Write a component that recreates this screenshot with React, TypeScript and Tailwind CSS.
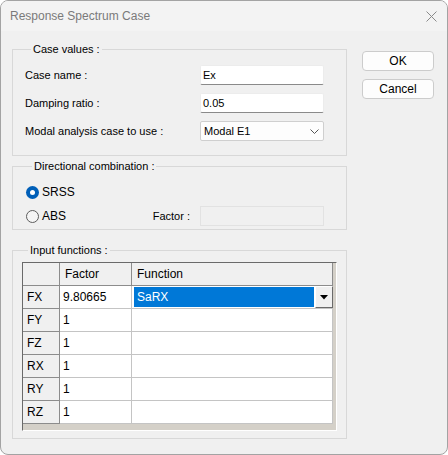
import React from "react";

const font = { fontFamily: '"Liberation Sans", Arial, sans-serif' };

const GroupBox = ({
  title,
  className,
  children,
}: {
  title: string;
  className?: string;
  children: React.ReactNode;
}) => (
  <fieldset className={`border border-[#d8d8d8] ${className ?? ""}`}>
    <legend className="ml-[6px] px-[2px] leading-4">{title}</legend>
    {children}
  </fieldset>
);

const TextBox = ({ value }: { value: string }) => (
  <div className="flex h-[20px] w-[124px] items-center border border-[#ececec] border-b-[#8a8a8a] bg-white pl-[2px] rounded-[2px]">
    {value}
  </div>
);

const Radio = ({ checked, label }: { checked: boolean; label: string }) => (
  <div className="flex items-center gap-[3px]">
    {checked ? (
      <span className="flex h-[13px] w-[13px] items-center justify-center rounded-full bg-[#005fb8]">
        <span className="h-[5px] w-[5px] rounded-full bg-white" />
      </span>
    ) : (
      <span className="h-[13px] w-[13px] rounded-full border border-[#5d5d5d] bg-[#f5f5f5]" />
    )}
    <span className="text-[12px]">{label}</span>
  </div>
);

const rows = [
  { name: "FX", factor: "9.80665", fn: "SaRX" },
  { name: "FY", factor: "1", fn: "" },
  { name: "FZ", factor: "1", fn: "" },
  { name: "RX", factor: "1", fn: "" },
  { name: "RY", factor: "1", fn: "" },
  { name: "RZ", factor: "1", fn: "" },
];

const head = "bg-[#f0f0f0] border-r border-b border-[#8c8c8c] flex items-center";
const cell = "bg-white border-r border-b border-[#c4c4c4] flex items-center";

const DataGrid = () => (
  <div className="h-[169px] w-[315px] border border-[#6a6a6a] border-r-white border-b-white bg-[#d4d0c8] text-[12px]">
    <div className="flex h-[23px]">
      <div className={`${head} w-[37px]`} />
      <div className={`${head} w-[72px] pl-[5px]`}>Factor</div>
      <div className={`${head} w-[201px] pl-[5px]`}>Function</div>
    </div>
    {rows.map((r) => (
      <div key={r.name} className="flex h-[23px]">
        <div className={`${head} w-[37px] pl-[4px]`}>{r.name}</div>
        <div className={`${cell} w-[72px] pl-[3px]`}>{r.factor}</div>
        {r.fn ? (
          <div className="flex w-[201px] border-b border-[#c4c4c4] bg-white">
            <div className="my-[1px] ml-[2px] flex flex-1 items-center bg-[#0078d7] pl-[3px] text-white">
              {r.fn}
            </div>
            <div className="ml-[1px] flex w-[18px] items-center justify-center border border-white border-r-[#6a6a6a] border-b-[#6a6a6a] bg-[#f0f0f0]">
              <svg width="8" height="5" viewBox="0 0 8 5">
                <path d="M0 0H8L4 4.5Z" fill="#000" />
              </svg>
            </div>
          </div>
        ) : (
          <div className={`${cell} w-[201px]`} />
        )}
      </div>
    ))}
  </div>
);

export default function App() {
  return (
    <div
      style={font}
      className="flex h-[455px] w-[448px] flex-col overflow-hidden rounded-[8px] border border-[#a3a3a3] bg-[#f0f0f0] text-[11px] text-black"
    >
      <div className="flex h-[30px] shrink-0 items-center justify-between bg-[#f3f3f3] pl-[9px] pr-[10px]">
        <span className="text-[12px] text-[#7a7a7a]">Response Spectrum Case</span>
        <svg width="11" height="11" viewBox="0 0 11 11">
          <path d="M0.5 0.5L10.5 10.5M10.5 0.5L0.5 10.5" stroke="#8a8a8a" strokeWidth="1" />
        </svg>
      </div>
      <div className="flex gap-[15px] pl-[11px]">
        <div className="flex w-[335px] flex-col pt-[10px]">
          <GroupBox title="Case values :" className="pb-[14px] pl-[12px] pr-[22px] pt-[8px]">
            <div className="flex flex-col gap-[8px]">
              <div className="flex items-center justify-between">
                <span>Case name :</span>
                <TextBox value="Ex" />
              </div>
              <div className="flex items-center justify-between">
                <span>Damping ratio :</span>
                <TextBox value="0.05" />
              </div>
              <div className="flex items-center justify-between">
                <span>Modal analysis case to use :</span>
                <div className="flex h-[20px] w-[124px] items-center justify-between rounded-[2px] border border-[#cfcfcf] bg-[#fdfdfd] pl-[3px] pr-[4px]">
                  <span>Modal E1</span>
                  <svg width="9" height="5" viewBox="0 0 9 5">
                    <path d="M0.5 0.5L4.5 4.5L8.5 0.5" stroke="#555" fill="none" strokeWidth="1" />
                  </svg>
                </div>
              </div>
            </div>
          </GroupBox>
          <GroupBox title="Directional combination :" className="mt-[2px] pb-[3px] pl-[13px] pr-[22px] pt-[10px]">
            <div className="flex h-[16px] items-center">
              <Radio checked label="SRSS" />
            </div>
            <div className="mt-[6px] flex h-[20px] items-center justify-between">
              <Radio checked={false} label="ABS" />
              <div className="flex items-center gap-[10px]">
                <span>Factor :</span>
                <div className="h-[20px] w-[124px] border border-[#e2e2e2] bg-[#f0f0f0]" />
              </div>
            </div>
          </GroupBox>
          <GroupBox title="Input functions :" className="mt-[12px] pb-[7px] pl-[9px] pt-[4px]">
            <DataGrid />
          </GroupBox>
        </div>
        <div className="flex flex-col gap-[8px] pt-[20px]">
          <button className="h-[20px] w-[72px] rounded-[4px] border border-[#cccccc] bg-[#fdfdfd] text-[12px]">
            OK
          </button>
          <button className="h-[20px] w-[72px] rounded-[4px] border border-[#cccccc] bg-[#fdfdfd] text-[12px]">
            Cancel
          </button>
        </div>
      </div>
    </div>
  );
}
